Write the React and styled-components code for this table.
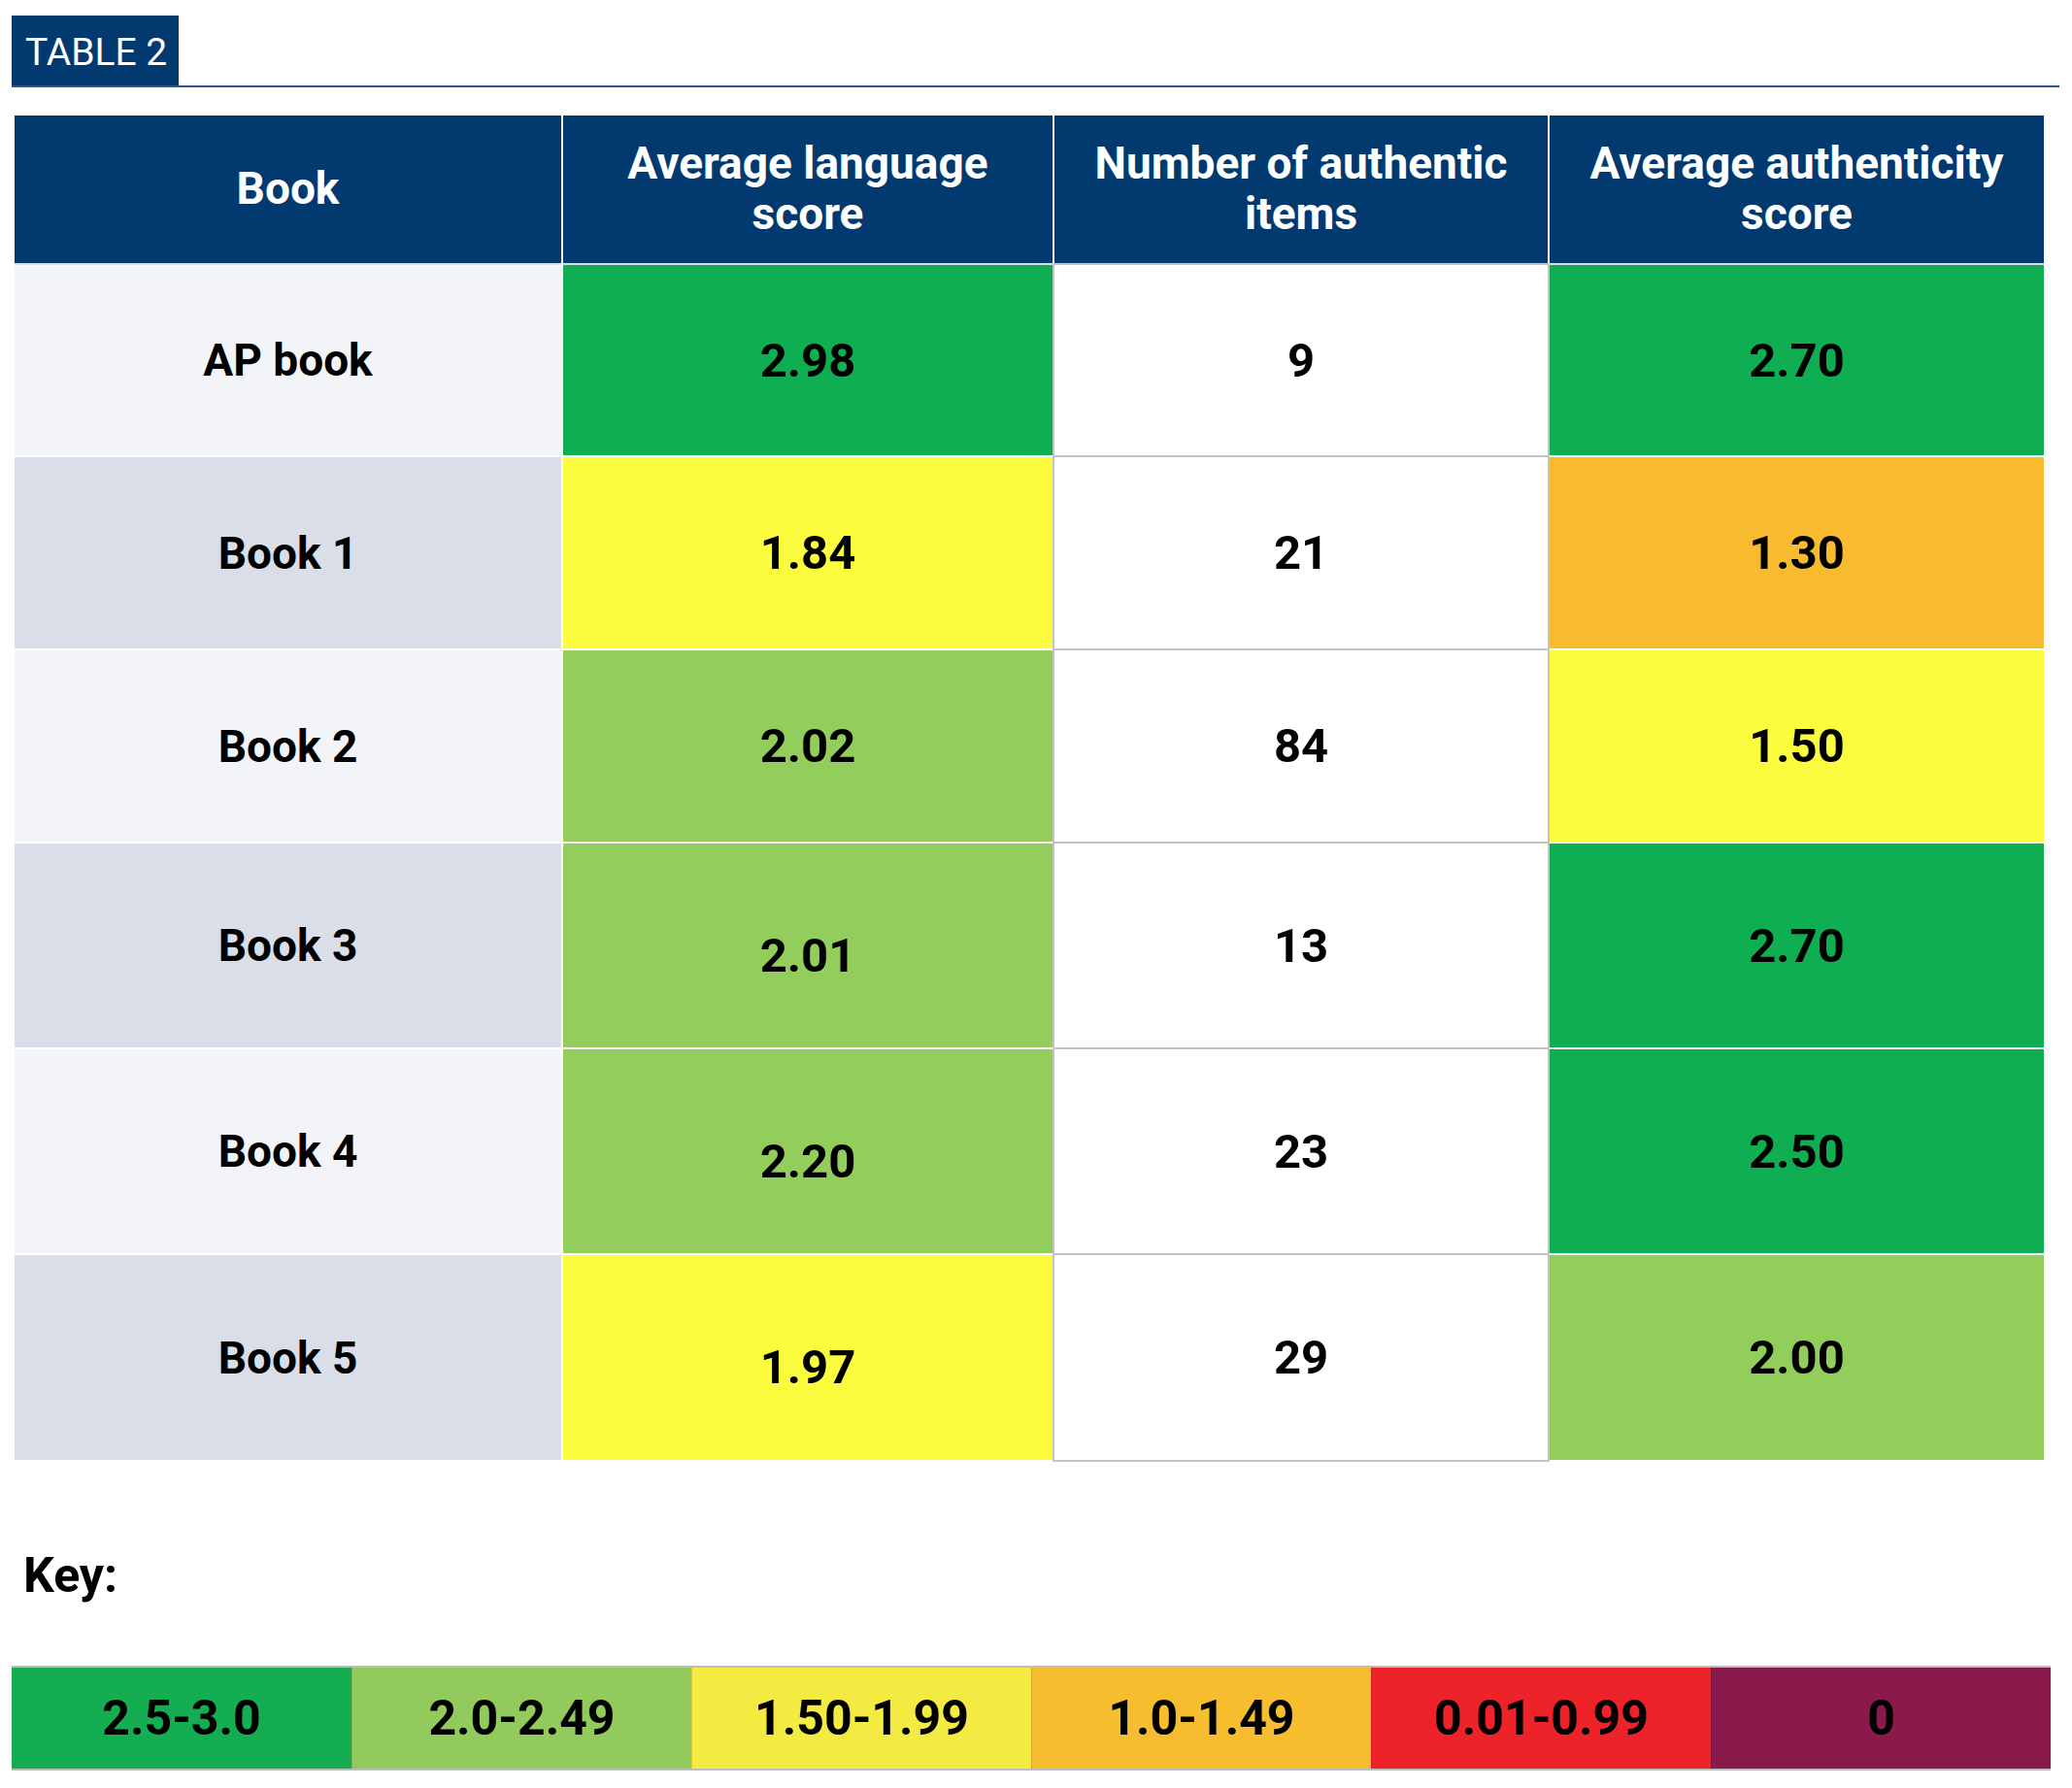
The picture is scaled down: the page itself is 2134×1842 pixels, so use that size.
import React from 'react';
import styled, { createGlobalStyle } from 'styled-components';

const navy = '#023a70';

const GlobalStyle = createGlobalStyle`
  body {
    margin: 0;
    background: #ffffff;
    font-family: Roboto, "Liberation Sans", Arial, sans-serif;
  }
`;

const Page = styled.div`
  display: flex;
  flex-direction: column;
  padding: 16px 0 0 12px;
  width: 2109px;
`;

const TitleBar = styled.div`
  display: flex;
  align-items: flex-end;
  border-bottom: 2px solid #2a5690;
`;

const Tab = styled.div`
  height: 72px;
  padding: 3px 12px 0 14px;
  box-sizing: border-box;
  display: flex;
  align-items: center;
  background: ${navy};
  color: #ffffff;
  font-size: 39px;
  font-weight: 400;
`;

const Table = styled.div`
  margin: 29px 0 0 3px;
  width: 2090px;
  display: grid;
  grid-template-columns: 563px 504px 508px 509px;
  grid-template-rows: 152px 196px 197px 197px 210px 210px 211px;
  gap: 2px;
  background: #ffffff;
`;

const HeadCell = styled.div`
  display: flex;
  align-items: center;
  justify-content: center;
  text-align: center;
  padding: 0 20px 3px;
  background: ${navy};
  color: #ffffff;
  font-size: 46px;
  font-weight: 700;
  line-height: 52px;
  box-shadow: 0 2px 0 #d9dee6;
`;

const Cell = styled.div`
  display: flex;
  align-items: center;
  justify-content: center;
  padding-top: ${props => (props.$drop ? '20px' : '0')};
  box-sizing: border-box;
  background: ${props => props.$bg};
  color: #000000;
  font-size: ${props => (props.$label ? '46px' : '49px')};
  font-weight: 700;
  box-shadow: ${props => (props.$framed ? '0 0 0 2px #c4c4c4' : 'none')};
`;

const KeyLabel = styled.div`
  margin: 91px 0 0 12px;
  font-size: 50px;
  font-weight: 700;
  line-height: 56px;
  color: #000000;
`;

const KeyBar = styled.div`
  margin-top: 65px;
  width: 2100px;
  display: grid;
  grid-template-columns: repeat(6, 1fr);
  border-top: 2px solid #bcbcbc;
  border-bottom: 2px solid #bcbcbc;
`;

const KeySwatch = styled.div`
  height: 104px;
  display: flex;
  align-items: center;
  justify-content: center;
  background: ${props => props.$bg};
  border-left: 1px solid rgba(0, 0, 0, 0.12);
  color: #000000;
  font-size: 50px;
  font-weight: 700;
  &:first-child {
    border-left: none;
  }
`;

const green = '#10ae53';
const lime = '#93ce5c';
const yellow = '#fafc3d';
const orange = '#f8bb2f';

const rows = [
  { book: 'AP book', lang: '2.98', langBg: green, items: '9', auth: '2.70', authBg: green },
  { book: 'Book 1', lang: '1.84', langBg: yellow, items: '21', auth: '1.30', authBg: orange },
  { book: 'Book 2', lang: '2.02', langBg: lime, items: '84', auth: '1.50', authBg: yellow },
  { book: 'Book 3', lang: '2.01', langBg: lime, items: '13', auth: '2.70', authBg: green, drop: true },
  { book: 'Book 4', lang: '2.20', langBg: lime, items: '23', auth: '2.50', authBg: green, drop: true },
  { book: 'Book 5', lang: '1.97', langBg: yellow, items: '29', auth: '2.00', authBg: lime, drop: true },
];

const keys = [
  { label: '2.5-3.0', bg: '#15ad52' },
  { label: '2.0-2.49', bg: '#93ca5c' },
  { label: '1.50-1.99', bg: '#f3ea42' },
  { label: '1.0-1.49', bg: '#f6bd2e' },
  { label: '0.01-0.99', bg: '#ed2329' },
  { label: '0', bg: '#8a1a4b' },
];

const App = () => {
  return (
    <>
      <GlobalStyle />
      <Page>
        <TitleBar>
          <Tab>TABLE 2</Tab>
        </TitleBar>
        <Table>
          <HeadCell>Book</HeadCell>
          <HeadCell>Average language score</HeadCell>
          <HeadCell>Number of authentic items</HeadCell>
          <HeadCell>Average authenticity score</HeadCell>
          {rows.map((row, i) => (
            <React.Fragment key={row.book}>
              <Cell $label $bg={i % 2 === 0 ? '#f3f4f8' : '#d9dee8'}>{row.book}</Cell>
              <Cell $bg={row.langBg} $drop={row.drop}>{row.lang}</Cell>
              <Cell $bg="#ffffff" $framed>{row.items}</Cell>
              <Cell $bg={row.authBg}>{row.auth}</Cell>
            </React.Fragment>
          ))}
        </Table>
        <KeyLabel>Key:</KeyLabel>
        <KeyBar>
          {keys.map(k => (
            <KeySwatch key={k.label} $bg={k.bg}>{k.label}</KeySwatch>
          ))}
        </KeyBar>
      </Page>
    </>
  );
};

export default App;
